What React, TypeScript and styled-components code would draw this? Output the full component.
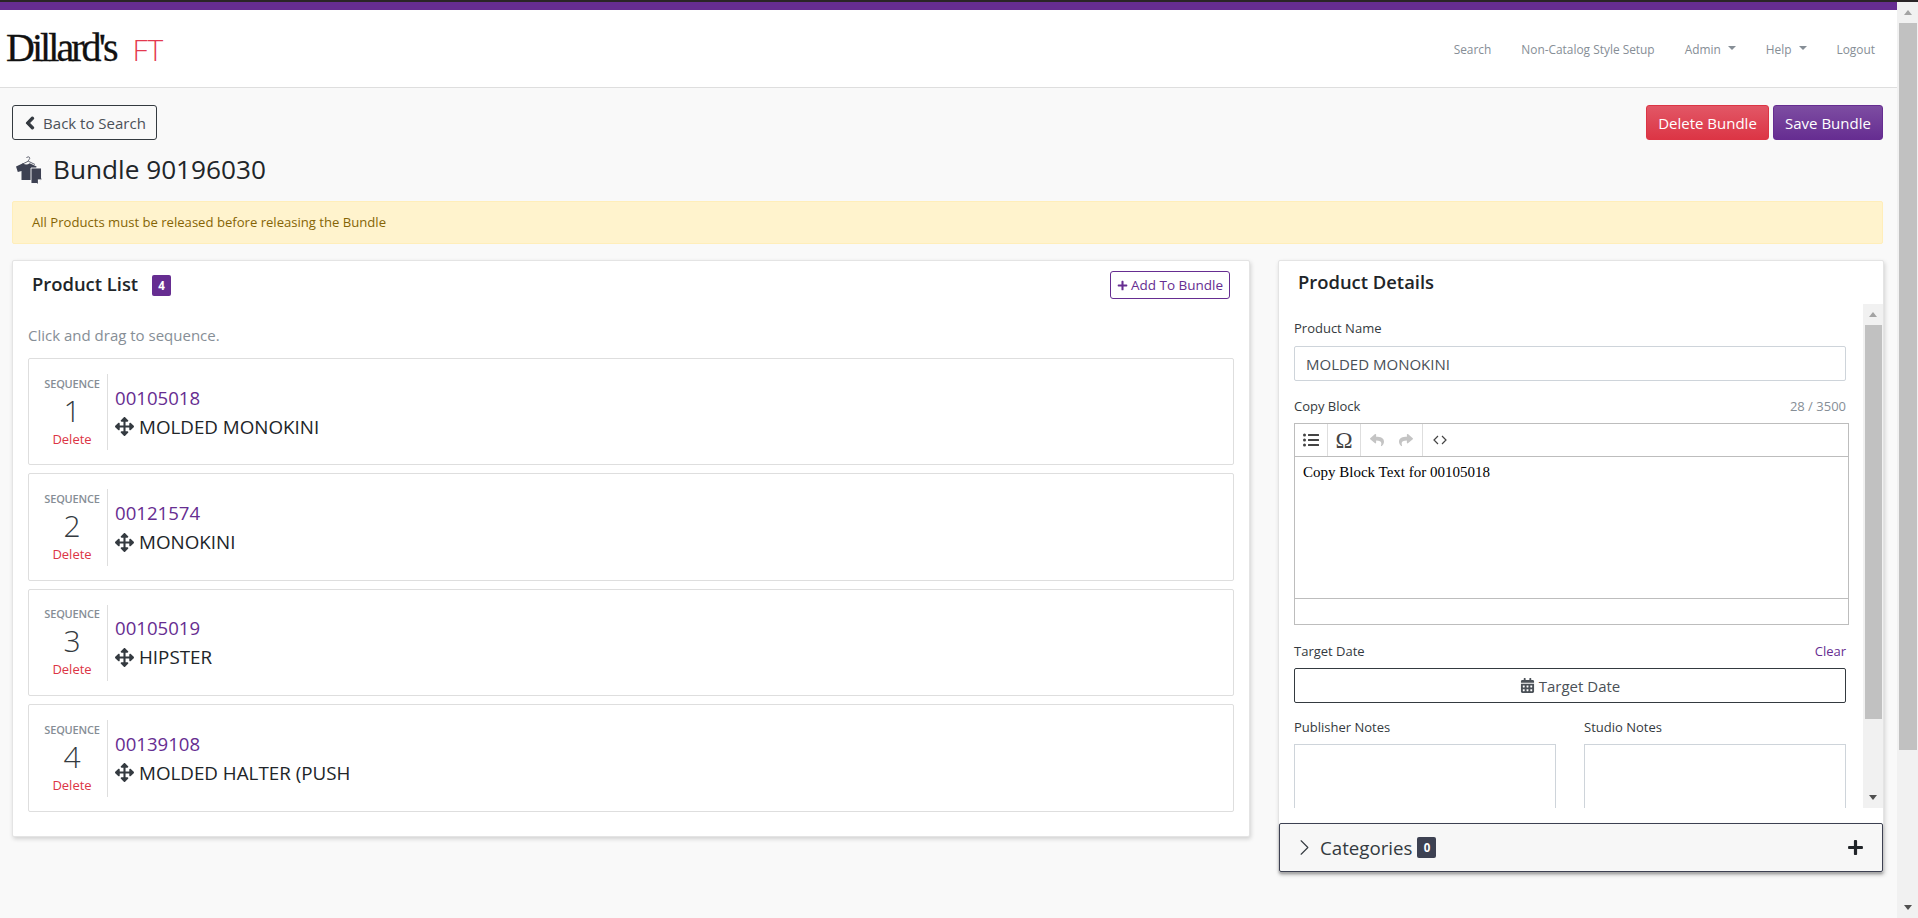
import { createGlobalStyle, styled } from 'styled-components';
import { FaArrowsAlt, FaCalendarAlt, FaChevronLeft, FaListUl, FaPlus, FaReply, FaShare } from 'react-icons/fa';
import { ChevronRight } from 'lucide-react';

const GlobalStyle = createGlobalStyle`
  html, body { margin: 0; padding: 0; height: 100%; overflow: hidden; }
  body {
    font-family: "Open Sans", "Liberation Sans", sans-serif;
    background: #f9f9f9;
    color: #212529;
  }
  * { box-sizing: border-box; }
`;

const Shell = styled.div`
  width: 1918px;
  height: 918px;
  overflow: hidden;
  border-top: 2px solid #2a2527;
  display: flex;
`;

const Main = styled.div`
  width: 1897px;
  flex: none;
  display: flex;
  flex-direction: column;
`;

const Scrollbar = styled.div<{ $w: number }>`
  width: ${(p) => p.$w}px;
  flex: none;
  background: #f1f1f1;
  display: flex;
  flex-direction: column;
  align-items: center;
`;

const ScrollButton = styled.div`
  height: 21px;
  flex: none;
  display: flex;
  align-items: center;
  justify-content: center;
`;

const Arrow = styled.span<{ $down?: boolean }>`
  width: 0;
  height: 0;
  border-left: 4.5px solid transparent;
  border-right: 4.5px solid transparent;
  ${(p) => (p.$down ? 'border-top: 5px solid #505050;' : 'border-bottom: 5px solid #a3a3a3;')}
`;

const ScrollThumb = styled.div<{ $h: number }>`
  width: calc(100% - 3px);
  height: ${(p) => p.$h}px;
  background: #c1c1c1;
  flex: none;
`;

const Spacer = styled.div`
  flex: 1;
`;

const Navbar = styled.header`
  height: 86px;
  flex: none;
  background: #fff;
  border-top: 8px solid #662d91;
  border-bottom: 1px solid #dedede;
  display: flex;
  align-items: center;
  justify-content: space-between;
  padding: 0 22px 0 6px;
`;

const Brand = styled.div`
  display: flex;
  align-items: baseline;
  gap: 17px;
  margin-top: -2px;
`;

const LogoText = styled.span`
  font-family: "Liberation Serif", serif;
  font-size: 40px;
  letter-spacing: -2.95px;
  color: #111;
  -webkit-text-stroke: 0.3px #111;
`;

const AppName = styled.span`
  font-size: 30px;
  font-weight: 300;
  color: #e4394f;
`;

const NavLinks = styled.nav`
  display: flex;
  align-items: center;
  gap: 30px;
  font-size: 11.9px;
  color: #868e96;
`;

const NavItem = styled.a`
  display: flex;
  align-items: center;
  gap: 7px;
`;

const Caret = styled.span`
  width: 0;
  height: 0;
  border-left: 4px solid transparent;
  border-right: 4px solid transparent;
  border-top: 4px solid #868e96;
  margin-bottom: 2px;
`;

const Content = styled.main`
  padding: 17px 14px 0 12px;
  display: flex;
  flex-direction: column;
`;

const ActionRow = styled.div`
  display: flex;
  justify-content: space-between;
`;

const ButtonGroup = styled.div`
  display: flex;
  gap: 4px;
`;

const OutlineButton = styled.button`
  height: 35px;
  width: 145px;
  border: 1px solid #343a40;
  border-radius: 3px;
  background: transparent;
  font: 15px "Open Sans", sans-serif;
  color: #4b5158;
  display: flex;
  align-items: center;
  justify-content: center;
  gap: 6px;
  padding: 0;
  svg {
    color: #343a40;
    font-size: 14px;
    stroke: #343a40;
    stroke-width: 40px;
  }
`;

const SolidButton = styled.button<{ $tone: 'red' | 'purple'; $w: number }>`
  height: 35px;
  width: ${(p) => p.$w}px;
  border-radius: 3px;
  border: 1px solid ${(p) => (p.$tone === 'red' ? '#dc3545' : '#662d91')};
  background: ${(p) =>
    p.$tone === 'red'
      ? 'linear-gradient(180deg, #e25766, #dc3545)'
      : 'linear-gradient(180deg, #7d4da2, #662d91)'};
  color: #fff;
  font: 15px "Open Sans", sans-serif;
  padding: 0;
`;

const TitleRow = styled.div`
  height: 46px;
  margin-top: 6px;
  display: flex;
  align-items: center;
  gap: 10px;
  padding-left: 4px;
`;

const Title = styled.h1`
  margin: 0;
  font-size: 26.2px;
  font-weight: 400;
  color: #212529;
`;

const Alert = styled.div`
  height: 43px;
  margin-top: 9px;
  background: #fff3cd;
  border: 1px solid #ffeeba;
  border-radius: 2px;
  color: #856404;
  font-size: 13.1px;
  padding: 0 19px 2px;
  display: flex;
  align-items: center;
`;

const Columns = styled.div`
  margin-top: 16px;
  display: grid;
  grid-template-columns: 1238px 606px;
  column-gap: 28px;
  align-items: start;
`;

const Card = styled.section`
  background: #fff;
  border: 1px solid #e4e4e4;
  border-radius: 2px;
  box-shadow: 1px 2px 4px rgba(0, 0, 0, 0.16);
`;

const ListCard = styled(Card)`
  height: 577px;
  padding: 0 15px;
`;

const ListHeader = styled.div`
  height: 63px;
  display: flex;
  align-items: center;
  justify-content: space-between;
  padding: 0 4px 15px 4px;
`;

const HeadingGroup = styled.div`
  display: flex;
  align-items: center;
  gap: 14px;
`;

const CardHeading = styled.h2<{ $lift?: boolean }>`
  margin: 0 0 ${(p) => (p.$lift ? '4px' : '0')};
  font-size: 18.4px;
  font-weight: 600;
  color: #212529;
`;

const CountBadge = styled.span<{ $dark?: boolean }>`
  min-width: 19px;
  height: 21px;
  border-radius: 2px;
  background: ${(p) => (p.$dark ? '#3d4152' : '#662d91')};
  color: #fff;
  font-size: 11.5px;
  font-weight: 700;
  display: inline-flex;
  align-items: center;
  justify-content: center;
  margin-left: ${(p) => (p.$dark ? '3px' : '0')};
`;

const AddButton = styled.button`
  width: 120px;
  height: 28px;
  border: 1px solid #662d91;
  border-radius: 3px;
  background: #fff;
  color: #662d91;
  font: 13.5px "Open Sans", sans-serif;
  display: flex;
  align-items: center;
  justify-content: center;
  gap: 3px;
  padding: 0;
  svg { font-size: 11px; }
`;

const Hint = styled.p`
  margin: 0 0 12px;
  font-size: 15px;
  line-height: 22px;
  color: #868e96;
`;

const RowList = styled.div`
  display: flex;
  flex-direction: column;
  gap: 8px;
`;

const Row = styled.article`
  height: 107.4px;
  border: 1px solid #dedede;
  border-radius: 2px;
  background: #fff;
  padding: 15px 15px 14px 0;
  display: flex;
  align-items: stretch;
`;

const SeqColumn = styled.div`
  width: 79px;
  flex: none;
  border-right: 1px solid #dedede;
  display: flex;
  flex-direction: column;
  align-items: center;
  justify-content: center;
  padding-left: 8px;
`;

const SeqLabel = styled.span`
  font-size: 11px;
  font-weight: 600;
  line-height: 14px;
  letter-spacing: -0.2px;
  color: #868e96;
`;

const SeqNumber = styled.span`
  font-size: 30px;
  font-weight: 300;
  line-height: 39px;
  color: #343a40;
`;

const SeqDelete = styled.a`
  font-size: 13px;
  line-height: 18px;
  color: #dc3545;
`;

const RowBody = styled.div`
  padding-left: 7px;
  display: flex;
  flex-direction: column;
  justify-content: center;
`;

const ProductLink = styled.a`
  font-size: 18.6px;
  line-height: 29px;
  color: #662d91;
`;

const ProductName = styled.div`
  font-size: 18.8px;
  line-height: 30px;
  color: #212529;
  display: flex;
  align-items: center;
  gap: 5px;
  svg { font-size: 19px; color: #343a40; }
`;

const DetailCard = styled(Card)`
  height: 613px;
  display: flex;
  flex-direction: column;
`;

const DetailHeader = styled.div`
  height: 43px;
  flex: none;
  padding: 0 0 2px 19px;
  display: flex;
  align-items: center;
`;

const DetailScroll = styled.div`
  height: 504px;
  flex: none;
  display: flex;
`;

const DetailBody = styled.div`
  flex: 1;
  min-width: 0;
  overflow: hidden;
  padding: 14px 17px 0 15px;
`;

const FieldHead = styled.div`
  display: flex;
  justify-content: space-between;
  font-size: 13px;
  line-height: 20px;
  color: #343a40;
`;

const MutedText = styled.span`
  color: #868e96;
`;

const ClearLink = styled.a`
  color: #662d91;
`;

const TextInput = styled.div`
  height: 35px;
  margin: 8px 0 15px;
  border: 1px solid #ced4da;
  border-radius: 2px;
  background: #fff;
  padding: 0 11px;
  font-size: 15px;
  color: #495057;
  display: flex;
  align-items: center;
`;

const Editor = styled.div`
  width: 555px;
  height: 202px;
  margin: 7px 0 16px;
  border: 1px solid #bdbdbd;
  display: flex;
  flex-direction: column;
`;

const EditorToolbar = styled.div`
  height: 33px;
  flex: none;
  border-bottom: 1px solid #bdbdbd;
  display: flex;
`;

const ToolGroup = styled.div<{ $w: number; $faded?: boolean }>`
  width: ${(p) => p.$w}px;
  border-right: 1px solid #dedede;
  color: ${(p) => (p.$faded ? '#c4c4c4' : '#444')};
  display: flex;
  align-items: center;
  justify-content: center;
  font-size: 16px;
`;

const FadedIcons = styled.span`
  display: flex;
  gap: 15px;
  font-size: 14px;
`;

const OmegaGlyph = styled.span`
  font-family: "Liberation Serif", serif;
  font-size: 23px;
  line-height: 1;
`;

const CodeGlyph = styled.div`
  color: #444;
  padding-left: 10px;
  display: flex;
  align-items: center;
`;

const EditorText = styled.div`
  flex: 1;
  padding: 6px 8px;
  font-family: "Liberation Serif", serif;
  font-size: 15px;
  line-height: 18px;
  color: #000;
`;

const EditorStatus = styled.div`
  height: 26px;
  flex: none;
  border-top: 1px solid #bdbdbd;
`;

const DateButton = styled.button`
  width: 100%;
  height: 35px;
  margin: 7px 0 14px;
  border: 1px solid #343a40;
  border-radius: 2px;
  background: #fff;
  color: #4b5158;
  font: 15px "Open Sans", sans-serif;
  display: flex;
  align-items: center;
  justify-content: center;
  gap: 4px;
  padding: 0;
  svg { font-size: 15px; }
`;

const NotesGrid = styled.div`
  display: grid;
  grid-template-columns: 262px 262px;
  column-gap: 28px;
`;

const NotesBox = styled.div`
  height: 120px;
  margin-top: 7px;
  border: 1px solid #ced4da;
  background: #fff;
`;

const Accordion = styled.div`
  height: 50px;
  margin-top: 15px;
  background: #f7f7f7;
  border: 1px solid #3d4152;
  border-radius: 2px;
  box-shadow: 0 2px 3px rgba(0, 0, 0, 0.3);
  padding: 0 18px 0 11px;
  display: flex;
  align-items: center;
  justify-content: space-between;
`;

const AccordionTitle = styled.div`
  display: flex;
  align-items: center;
  gap: 2px;
  font-size: 18.7px;
  color: #343a40;
`;

const AccordionPlus = styled.span`
  color: #212529;
  font-size: 17px;
  display: flex;
`;

const BundleIcon = () => (
  <svg width="27" height="29" viewBox="0 0 27 29">
    <path d="M10.5 3c.5-1.800 3.500-1.500 3.200.5-.2 1-1.400 1.200-1.400 2.700l6.700 3.300" fill="none" stroke="#3d4152" strokeWidth="0.8" />
    <path d="M12.300 6.200L5.500 9.500" fill="none" stroke="#3d4152" strokeWidth="0.8" />
    <path d="M0 11.500L7 8.200c2 1.600 4.600 1.600 6.600 0l7 3.300-1.500 5.500-3.600-1V25H5.500V16l-3.700 1z" fill="#3d4152" />
    <path d="M15 13h10.500v11l-4 4.500H15z" fill="#3d4152" stroke="#fff" strokeWidth="0.9" />
    <path d="M21.500 28.500V24h4" fill="#fff" stroke="#3d4152" strokeWidth="0.8" />
  </svg>
);

const CodeIcon = () => (
  <svg width="14" height="10" viewBox="0 0 14 10" fill="none" stroke="#444" strokeWidth="1.2">
    <path d="M5 1L1 5l4 4M9 1l4 4-4 4" />
  </svg>
);

const products = [
  { seq: 1, id: '00105018', name: 'MOLDED MONOKINI' },
  { seq: 2, id: '00121574', name: 'MONOKINI' },
  { seq: 3, id: '00105019', name: 'HIPSTER' },
  { seq: 4, id: '00139108', name: 'MOLDED HALTER (PUSH' },
];

function App() {
  return (
    <Shell>
      <GlobalStyle />
      <Main>
        <Navbar>
          <Brand>
            <LogoText>Dillard's</LogoText>
            <AppName>FT</AppName>
          </Brand>
          <NavLinks>
            <NavItem>Search</NavItem>
            <NavItem>Non-Catalog Style Setup</NavItem>
            <NavItem>
              Admin <Caret />
            </NavItem>
            <NavItem>
              Help <Caret />
            </NavItem>
            <NavItem>Logout</NavItem>
          </NavLinks>
        </Navbar>

        <Content>
          <ActionRow>
            <OutlineButton>
              <FaChevronLeft />
              Back to Search
            </OutlineButton>
            <ButtonGroup>
              <SolidButton $tone="red" $w={123}>
                Delete Bundle
              </SolidButton>
              <SolidButton $tone="purple" $w={110}>
                Save Bundle
              </SolidButton>
            </ButtonGroup>
          </ActionRow>

          <TitleRow>
            <BundleIcon />
            <Title>Bundle 90196030</Title>
          </TitleRow>

          <Alert>All Products must be released before releasing the Bundle</Alert>

          <Columns>
            <ListCard>
              <ListHeader>
                <HeadingGroup>
                  <CardHeading $lift>Product List</CardHeading>
                  <CountBadge>4</CountBadge>
                </HeadingGroup>
                <AddButton>
                  <FaPlus />
                  Add To Bundle
                </AddButton>
              </ListHeader>
              <Hint>Click and drag to sequence.</Hint>
              <RowList>
                {products.map((p) => (
                  <Row key={p.id}>
                    <SeqColumn>
                      <SeqLabel>SEQUENCE</SeqLabel>
                      <SeqNumber>{p.seq}</SeqNumber>
                      <SeqDelete>Delete</SeqDelete>
                    </SeqColumn>
                    <RowBody>
                      <ProductLink>{p.id}</ProductLink>
                      <ProductName>
                        <FaArrowsAlt />
                        {p.name}
                      </ProductName>
                    </RowBody>
                  </Row>
                ))}
              </RowList>
            </ListCard>

            <DetailCard>
              <DetailHeader>
                <CardHeading>Product Details</CardHeading>
              </DetailHeader>
              <DetailScroll>
                <DetailBody>
                  <FieldHead>Product Name</FieldHead>
                  <TextInput>MOLDED MONOKINI</TextInput>
                  <FieldHead>
                    Copy Block
                    <MutedText>28 / 3500</MutedText>
                  </FieldHead>
                  <Editor>
                    <EditorToolbar>
                      <ToolGroup $w={33}>
                        <FaListUl />
                      </ToolGroup>
                      <ToolGroup $w={33}>
                        <OmegaGlyph>Ω</OmegaGlyph>
                      </ToolGroup>
                      <ToolGroup $w={62} $faded>
                        <FadedIcons>
                          <FaReply />
                          <FaShare />
                        </FadedIcons>
                      </ToolGroup>
                      <CodeGlyph>
                        <CodeIcon />
                      </CodeGlyph>
                    </EditorToolbar>
                    <EditorText>Copy Block Text for 00105018</EditorText>
                    <EditorStatus />
                  </Editor>
                  <FieldHead>
                    Target Date
                    <ClearLink>Clear</ClearLink>
                  </FieldHead>
                  <DateButton>
                    <FaCalendarAlt />
                    Target Date
                  </DateButton>
                  <NotesGrid>
                    <div>
                      <FieldHead>Publisher Notes</FieldHead>
                      <NotesBox />
                    </div>
                    <div>
                      <FieldHead>Studio Notes</FieldHead>
                      <NotesBox />
                    </div>
                  </NotesGrid>
                </DetailBody>
                <Scrollbar $w={20}>
                  <ScrollButton>
                    <Arrow />
                  </ScrollButton>
                  <ScrollThumb $h={394} />
                  <Spacer />
                  <ScrollButton>
                    <Arrow $down />
                  </ScrollButton>
                </Scrollbar>
              </DetailScroll>
              <Accordion>
                <AccordionTitle>
                  <ChevronRight size={27} strokeWidth={1} />
                  Categories
                  <CountBadge $dark>0</CountBadge>
                </AccordionTitle>
                <AccordionPlus>
                  <FaPlus />
                </AccordionPlus>
              </Accordion>
            </DetailCard>
          </Columns>
        </Content>
      </Main>
      <Scrollbar $w={21}>
        <ScrollButton>
          <Arrow />
        </ScrollButton>
        <ScrollThumb $h={727} />
        <Spacer />
        <ScrollButton>
          <Arrow $down />
        </ScrollButton>
      </Scrollbar>
    </Shell>
  );
}

export default App;
